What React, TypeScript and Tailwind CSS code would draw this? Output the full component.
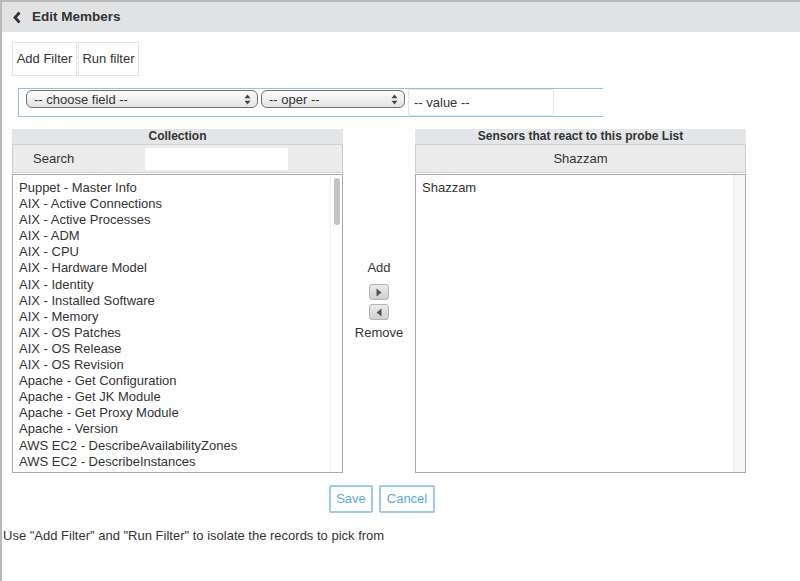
import React from "react";

const items = [
  "Puppet - Master Info",
  "AIX - Active Connections",
  "AIX - Active Processes",
  "AIX - ADM",
  "AIX - CPU",
  "AIX - Hardware Model",
  "AIX - Identity",
  "AIX - Installed Software",
  "AIX - Memory",
  "AIX - OS Patches",
  "AIX - OS Release",
  "AIX - OS Revision",
  "Apache - Get Configuration",
  "Apache - Get JK Module",
  "Apache - Get Proxy Module",
  "Apache - Version",
  "AWS EC2 - DescribeAvailabilityZones",
  "AWS EC2 - DescribeInstances",
];

function UpDown() {
  return (
    <svg width="7" height="11" viewBox="0 0 7 11" className="shrink-0">
      <path d="M3.5 0.5 L6.5 4.2 H0.5 Z" fill="#444" />
      <path d="M3.5 10.5 L6.5 6.8 H0.5 Z" fill="#444" />
    </svg>
  );
}

function FakeSelect({ label, width }: { label: string; width: string }) {
  return (
    <div
      className={`${width} mt-[1px] h-[18px] flex items-center justify-between pl-[7px] pr-[6px] rounded-[6px] border border-[#6f6f6f] bg-gradient-to-b from-[#fbfbfb] to-[#e4e4e4] text-[13px] text-[#333] leading-none`}
    >
      <span>{label}</span>
      <UpDown />
    </div>
  );
}

function ArrowButton({ dir }: { dir: "right" | "left" }) {
  return (
    <div className="w-[20px] h-[16px] rounded-[3px] border border-[#b4b4b4] bg-gradient-to-b from-[#ececec] to-[#cfcfcf] flex items-center justify-center">
      <svg width="6" height="9" viewBox="0 0 6 9">
        {dir === "right" ? (
          <path d="M0.5 0.5 L5.5 4.5 L0.5 8.5 Z" fill="#555" />
        ) : (
          <path d="M5.5 0.5 L0.5 4.5 L5.5 8.5 Z" fill="#555" />
        )}
      </svg>
    </div>
  );
}

export default function App() {
  return (
    <div
      className="w-[800px] h-[581px] bg-white border-l-2 border-t-2 border-[#b9b9b9] text-[#333] overflow-hidden flex flex-col"
      style={{ fontFamily: '"Liberation Sans", Arial, sans-serif' }}
    >
      {/* header */}
      <div className="h-[30px] shrink-0 bg-[#e1e2e4] flex items-center pl-[10px] gap-[10px]">
        <svg width="10" height="13" viewBox="0 0 10 13">
          <path d="M7.5 1.5 L3 6.5 L7.5 11.5" stroke="#333" strokeWidth="2.8" fill="none" />
        </svg>
        <span className="text-[13.5px] font-bold text-[#333]">Edit Members</span>
      </div>

      {/* filter buttons */}
      <div className="flex mt-[10px] ml-[10px] gap-[1px]">
        <button className="h-[34px] w-[65px] border border-[#e2e2e2] bg-white text-[13px] text-[#333]">
          Add Filter
        </button>
        <button className="h-[34px] w-[61px] border border-[#e2e2e2] bg-white text-[13px] text-[#333]">
          Run filter
        </button>
      </div>

      {/* filter row */}
      <div className="mt-[12px] ml-[16px] w-[585px] h-[29px] border-l border-y border-[#8fc3ec] flex items-start pl-[7px] gap-[3px]">
        <FakeSelect label="-- choose field --" width="w-[232px]" />
        <FakeSelect label="-- oper --" width="w-[144px]" />
        <div className="w-[146px] h-[27px] border border-[#e4e4e4] rounded-[2px] flex items-center pl-[5px] text-[13px] text-[#333]">
          -- value --
        </div>
      </div>

      {/* lists */}
      <div className="flex mt-[12px] ml-[10px]">
        <div className="w-[331px] flex flex-col">
          <div className="h-[15px] bg-[#e4e5e7] text-center text-[12px] font-bold leading-[15px] text-[#333]">
            Collection
          </div>
          <div className="h-[29px] bg-[#ebebeb] border border-[#cfcfcf] flex items-center">
            <span className="w-[132px] pl-[20px] text-[13px] text-[#333]">Search</span>
            <div className="w-[143px] h-[22px] bg-white" />
          </div>
          <div className="mt-[1px] h-[299px] border border-[#a9a9a9] flex">
            <div className="flex-1 pl-[6px] pt-[5px] text-[13px] leading-[16.1px] text-[#333]">
              {items.map((it) => (
                <div key={it}>{it}</div>
              ))}
            </div>
            <div className="w-[12px] h-full bg-white border-l border-[#f0f0f0] flex justify-center pt-[3px]">
              <div className="w-[6px] h-[47px] rounded-full bg-[#c2c2c2]" />
            </div>
          </div>
        </div>

        <div className="w-[72px] flex flex-col items-center pt-[131px] text-[13px] text-[#333]">
          <span className="leading-[16px]">Add</span>
          <div className="mt-[8px] flex flex-col gap-[4px] items-center">
            <ArrowButton dir="right" />
            <ArrowButton dir="left" />
          </div>
          <span className="mt-[5px] leading-[16px]">Remove</span>
        </div>

        <div className="w-[331px] flex flex-col">
          <div className="h-[15px] bg-[#e4e5e7] text-center text-[12px] font-bold leading-[15px] text-[#333]">
            Sensors that react to this probe List
          </div>
          <div className="h-[29px] bg-[#ebebeb] border border-[#cfcfcf] flex items-center justify-center text-[13px] text-[#333]">
            Shazzam
          </div>
          <div className="mt-[1px] h-[299px] border border-[#a9a9a9] flex">
            <div className="flex-1 pl-[6px] pt-[5px] text-[13px] leading-[16px] text-[#333]">Shazzam</div>
            <div className="w-[12px] h-full bg-[#f7f7f7] border-l border-[#ececec]" />
          </div>
        </div>
      </div>

      {/* save / cancel */}
      <div className="flex gap-[6px] mt-[12px] ml-[327px]">
        <button className="h-[28px] w-[44px] rounded-[2px] border-2 border-[#9dcaf0] text-[13px] text-[#5ea7e4] bg-white">
          Save
        </button>
        <button className="h-[28px] w-[56px] rounded-[2px] border-2 border-[#9dcaf0] text-[13px] text-[#5ea7e4] bg-white">
          Cancel
        </button>
      </div>

      <div className="mt-[13px] ml-[1px] text-[13px] text-[#333]">
        Use &quot;Add Filter&quot; and &quot;Run Filter&quot; to isolate the records to pick from
      </div>
    </div>
  );
}
